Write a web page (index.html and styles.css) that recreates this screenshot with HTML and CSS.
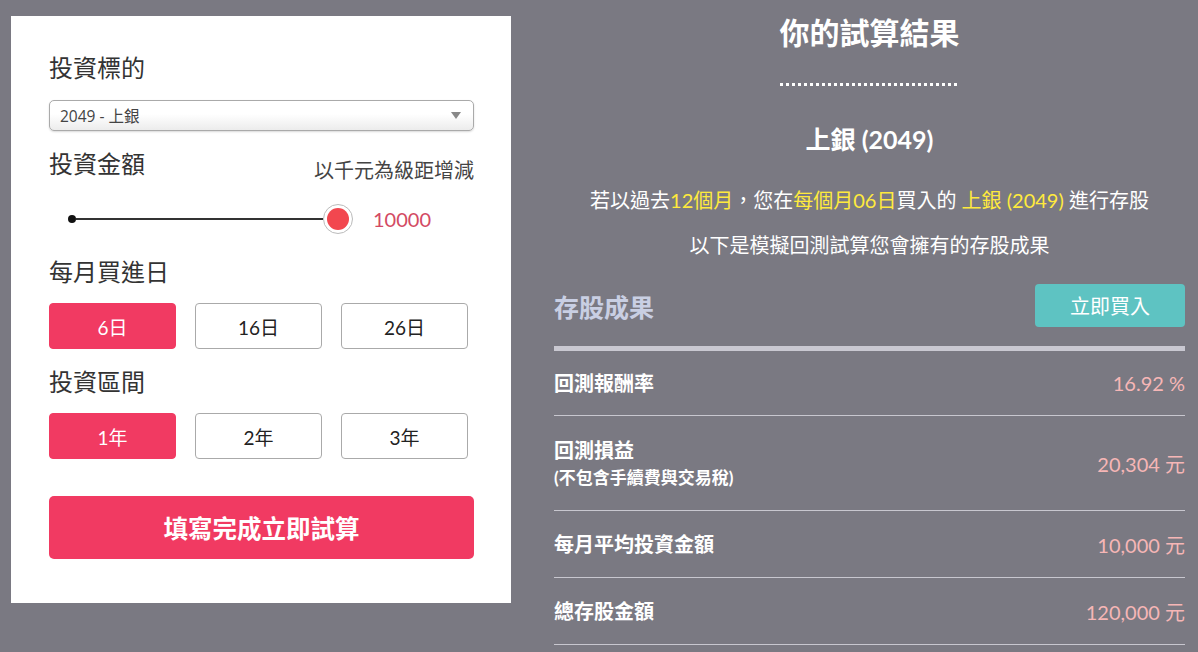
FILE: index.html
```html
<!DOCTYPE html>
<html lang="zh-Hant">
<head>
<meta charset="utf-8">
<title>存股試算</title>
<link rel="stylesheet" href="styles.css">
</head>
<body>
<div class="page">
  <section class="card">
    <div class="label">投資標的</div>
    <div class="select">
      <span>2049 - 上銀</span>
      <svg class="caret" width="10" height="7" viewBox="0 0 10 7"><path d="M0 0H10L5 7Z" fill="#888"/></svg>
    </div>
    <div class="label-row">
      <div class="label">投資金額</div>
      <div class="hint">以千元為級距增減</div>
    </div>
    <div class="slider">
      <span class="dot"></span>
      <span class="line"></span>
      <span class="thumb"><span class="thumb-in"></span></span>
      <span class="slider-val">10000</span>
    </div>
    <div class="label mt23">每月買進日</div>
    <div class="opts">
      <button class="opt active">6日</button>
      <button class="opt">16日</button>
      <button class="opt">26日</button>
    </div>
    <div class="label mt18">投資區間</div>
    <div class="opts">
      <button class="opt active">1年</button>
      <button class="opt">2年</button>
      <button class="opt">3年</button>
    </div>
    <button class="submit">填寫完成立即試算</button>
  </section>

  <section class="result">
    <h1 class="title">你的試算結果</h1>
    <div class="dots"></div>
    <h2 class="stock">上銀 (2049)</h2>
    <p class="desc">若以過去<span class="hl">12個月</span>，您在<span class="hl">每個月06日</span>買入的 <span class="hl">上銀 (2049)</span> 進行存股</p>
    <p class="desc2">以下是模擬回測試算您會擁有的存股成果</p>
    <div class="res-head">
      <div class="res-title">存股成果</div>
      <button class="buy">立即買入</button>
    </div>
    <div class="table">
      <div class="row r1">
        <div class="rl">回測報酬率</div>
        <div class="rv">16.92 %</div>
      </div>
      <div class="row r2">
        <div class="rl">回測損益<div class="sub">(不包含手續費與交易稅)</div></div>
        <div class="rv">20,304 元</div>
      </div>
      <div class="row r3">
        <div class="rl">每月平均投資金額</div>
        <div class="rv">10,000 元</div>
      </div>
      <div class="row r3">
        <div class="rl">總存股金額</div>
        <div class="rv">120,000 元</div>
      </div>
    </div>
  </section>
</div>
</body>
</html>
```

FILE: styles.css
```css
* { box-sizing: border-box; }
html, body { margin: 0; padding: 0; }
body {
  background: #7a7982;
  font-family: "Lato", "Noto Sans CJK TC", sans-serif;
  width: 1198px;
  height: 652px;
  overflow: hidden;
}
.page {
  display: flex;
  gap: 43px;
  padding: 16px 13px 0 11px;
}
.card {
  flex: 0 0 500px;
  align-self: flex-start;
  background: #fff;
  padding: 37px 37px 44px 38px;
  display: flex;
  flex-direction: column;
}
.label {
  font-size: 24px;
  line-height: 30px;
  color: #333;
}
.select {
  margin-top: 17px;
  height: 31px;
  border: 1px solid #aaa;
  border-radius: 5px;
  background: linear-gradient(#fff 0%, #fff 45%, #ececec 100%);
  box-shadow: 0 1px 2px rgba(0,0,0,0.15);
  display: flex;
  align-items: center;
  justify-content: space-between;
  padding: 0 12px 0 10px;
  font-family: "Open Sans", "Noto Sans CJK TC", sans-serif;
  font-size: 15.5px;
  color: #444;
}
.caret { display: block; }
.label-row {
  margin-top: 18px;
  display: flex;
  justify-content: space-between;
  align-items: flex-end;
}
.hint {
  font-size: 20px;
  color: #444;
  line-height: 24px;
  margin-bottom: -3px;
}
.slider {
  margin-top: 25px;
  height: 30px;
  display: flex;
  align-items: center;
  padding-left: 19px;
}
.dot {
  width: 8px;
  height: 8px;
  border-radius: 50%;
  background: #111;
  flex: none;
}
.line {
  flex: 0 0 247px;
  height: 2px;
  background: #333;
}
.thumb {
  flex: none;
  width: 30px;
  height: 30px;
  border-radius: 50%;
  border: 1px solid #bbb;
  background: #fff;
  display: flex;
  align-items: center;
  justify-content: center;
}
.thumb-in {
  width: 22px;
  height: 22px;
  border-radius: 50%;
  background: #f2474f;
}
.slider-val {
  margin-left: 20px;
  font-size: 20px;
  color: #d34a63;
}
.mt23 { margin-top: 23px; }
.mt18 { margin-top: 18px; }
.opts {
  margin-top: 16px;
  display: flex;
  gap: 19px;
}
.opt {
  width: 127px;
  height: 46px;
  border: 1px solid #aaa;
  border-radius: 4px;
  background: #fff;
  color: #222;
  font-family: "Lato", "Noto Sans CJK TC", sans-serif;
  font-size: 19px;
  padding: 0;
}
.opt.active {
  background: #f13a62;
  border-color: #f13a62;
  color: #fff;
}
.submit {
  margin-top: 37px;
  height: 63px;
  width: 100%;
  border: none;
  border-radius: 5px;
  background: #f13a62;
  color: #fff;
  font-family: "Lato", "Noto Sans CJK TC", sans-serif;
  font-size: 24.5px;
  font-weight: 700;
}

.result {
  flex: 0 0 631px;
  display: flex;
  flex-direction: column;
  align-items: stretch;
  color: #fff;
  margin-top: -16px;
}
.title {
  margin: 12px 0 0;
  text-align: center;
  font-size: 30px;
  line-height: 40px;
  font-weight: 700;
}
.dots {
  align-self: center;
  margin-top: 31px;
  width: 180px;
  height: 3px;
  background: repeating-linear-gradient(90deg, #fff 0 3px, transparent 3px 6px);
}
.stock {
  margin: 38px 0 0;
  text-align: center;
  font-size: 25px;
  line-height: 30px;
  font-weight: 700;
}
.desc {
  margin: 33px 0 0;
  text-align: center;
  font-size: 20px;
  line-height: 26px;
}
.hl { color: #ffea3d; }
.desc2 {
  margin: 19px 0 0;
  text-align: center;
  font-size: 20px;
  line-height: 26px;
}
.res-head {
  margin-top: 26px;
  display: flex;
  justify-content: space-between;
  align-items: center;
}
.res-title {
  font-size: 25px;
  font-weight: 700;
  color: #c9cfe3;
}
.buy {
  width: 150px;
  height: 43px;
  border: none;
  border-radius: 4px;
  background: #5ec3c2;
  color: #fff;
  font-family: "Lato", "Noto Sans CJK TC", sans-serif;
  font-size: 20px;
  padding: 0;
}
.table {
  margin-top: 19px;
  border-top: 5px solid #c9c8d1;
}
.row {
  display: flex;
  justify-content: space-between;
  align-items: center;
  border-bottom: 1px solid #c8c7cf;
}
.r1 { height: 65px; }
.r2 { height: 95px; }
.r3 { height: 67px; }
.rl {
  font-size: 20px;
  font-weight: 700;
  line-height: 26px;
}
.sub {
  margin-top: 3px;
  font-size: 17px;
  line-height: 24px;
}
.rv {
  font-size: 20px;
  color: #f6b6b6;
}
```
